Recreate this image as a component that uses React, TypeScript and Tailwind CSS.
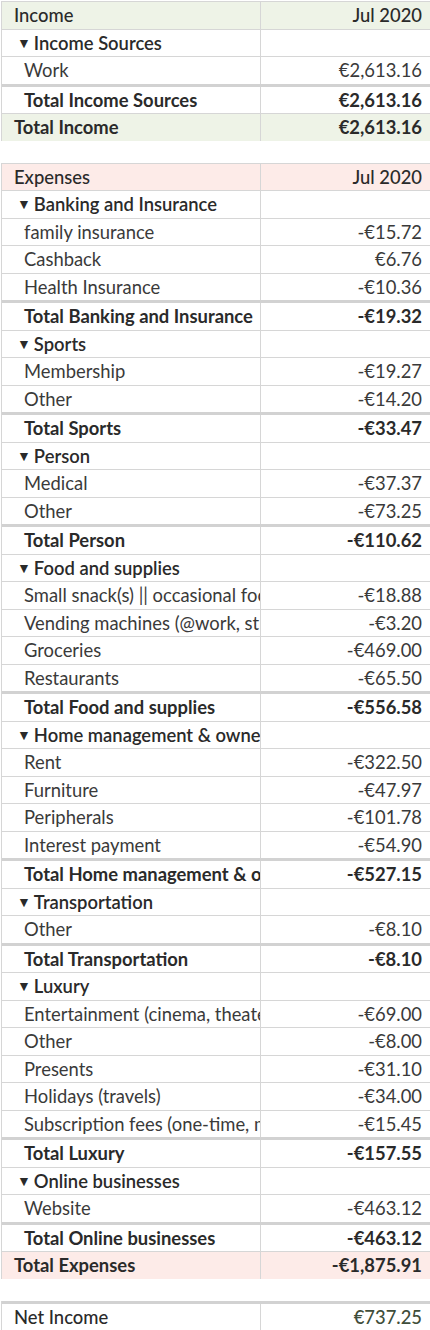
import React from "react";

type Row =
  | { kind: "head"; label: string; value: string; tone: "green" | "pink" }
  | { kind: "group"; label: string }
  | { kind: "leaf"; label: string; value: string }
  | { kind: "sub"; label: string; value: string }
  | { kind: "total"; label: string; value: string; tone: "green" | "pink" };

const income: Row[] = [
  { kind: "head", label: "Income", value: "Jul 2020", tone: "green" },
  { kind: "group", label: "Income Sources" },
  { kind: "leaf", label: "Work", value: "€2,613.16" },
  { kind: "sub", label: "Total Income Sources", value: "€2,613.16" },
  { kind: "total", label: "Total Income", value: "€2,613.16", tone: "green" },
];

const groups: [string, [string, string][], string][] = [
  ["Banking and Insurance", [["family insurance", "-€15.72"], ["Cashback", "€6.76"], ["Health Insurance", "-€10.36"]], "-€19.32"],
  ["Sports", [["Membership", "-€19.27"], ["Other", "-€14.20"]], "-€33.47"],
  ["Person", [["Medical", "-€37.37"], ["Other", "-€73.25"]], "-€110.62"],
  [
    "Food and supplies",
    [
      ["Small snack(s) || occasional food", "-€18.88"],
      ["Vending machines (@work, street)", "-€3.20"],
      ["Groceries", "-€469.00"],
      ["Restaurants", "-€65.50"],
    ],
    "-€556.58",
  ],
  [
    "Home management & ownership",
    [["Rent", "-€322.50"], ["Furniture", "-€47.97"], ["Peripherals", "-€101.78"], ["Interest payment", "-€54.90"]],
    "-€527.15",
  ],
  ["Transportation", [["Other", "-€8.10"]], "-€8.10"],
  [
    "Luxury",
    [
      ["Entertainment (cinema, theater)", "-€69.00"],
      ["Other", "-€8.00"],
      ["Presents", "-€31.10"],
      ["Holidays (travels)", "-€34.00"],
      ["Subscription fees (one-time, monthly)", "-€15.45"],
    ],
    "-€157.55",
  ],
  ["Online businesses", [["Website", "-€463.12"]], "-€463.12"],
];

const expenses: Row[] = [
  { kind: "head", label: "Expenses", value: "Jul 2020", tone: "pink" },
  ...groups.flatMap(([name, leaves, total]): Row[] => [
    { kind: "group", label: name },
    ...leaves.map(([l, v]): Row => ({ kind: "leaf", label: l, value: v })),
    { kind: "sub", label: "Total " + name, value: total },
  ]),
  { kind: "total", label: "Total Expenses", value: "-€1,875.91", tone: "pink" },
];

function TableRow({ row }: { row: Row }) {
  const bg =
    "tone" in row ? (row.tone === "green" ? "bg-[#eef3e7]" : "bg-[#fdebe8]") : "bg-white";
  const top =
    row.kind === "sub"
      ? "h-[29.5px] border-t-[3px] border-t-[#d2d2d2]"
      : "h-[27.5px] border-t border-t-[#d6d6d6]";
  const weight =
    row.kind === "leaf"
      ? "font-normal text-[#3a3a3a]"
      : row.kind === "head"
        ? "font-medium text-[#2a2a2a]"
        : row.kind === "group"
          ? "font-semibold text-[#2a2a2a]"
          : "font-bold text-[#2a2a2a]";
  const pad =
    row.kind === "head" || row.kind === "total" ? "pl-[12px]" : row.kind === "group" ? "pl-[15px]" : "pl-[22px]";

  return (
    <div className={`flex overflow-hidden ${top} ${bg} ${weight}`}>
      <div className={`w-[259px] shrink-0 overflow-hidden whitespace-nowrap py-[2px] pr-0 ${pad} border-r border-r-[#d6d6d6]`}>
        {row.kind === "group" && <span className="mr-[3px] inline-block text-[14px] align-[2px]">▼</span>}
        {row.label}
      </div>
      <div className="flex-1 whitespace-nowrap py-[2px] pr-[9px] text-right">
        {"value" in row ? row.value : ""}
      </div>
    </div>
  );
}

function Table({ rows }: { rows: Row[] }) {
  return (
    <div className="w-[430px] border-l border-l-[#d6d6d6]">
      {rows.map((r, i) => (
        <TableRow key={i} row={r} />
      ))}
    </div>
  );
}

export default function App() {
  return (
    <div
      className="h-[1330px] w-[430px] overflow-hidden bg-white text-[18.4px] leading-[22.5px]"
      style={{ fontFamily: "Lato, 'Open Sans', sans-serif" }}
    >
      <div className="pl-px pt-px">
        <Table rows={income} />
        <div className="h-[22px]" />
        <Table rows={expenses} />
        <div className="h-[22px]" />
        <div className="w-[430px] border-l border-l-[#d6d6d6]">
          <div className="flex h-[29.5px] border-t-[3px] border-t-[#d2d2d2] bg-white font-medium text-[#2a2a2a]">
            <div className="w-[259px] shrink-0 border-r border-r-[#d6d6d6] py-[2px] pl-[12px]">Net Income</div>
            <div className="flex-1 py-[2px] pr-[9px] text-right text-[#3f4d3a]">€737.25</div>
          </div>
        </div>
      </div>
    </div>
  );
}
